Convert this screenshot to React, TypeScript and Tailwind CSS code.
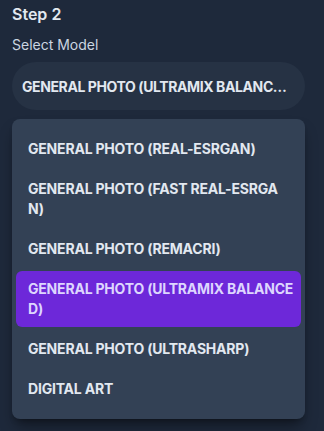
const models: { label: string; lines: string[] }[] = [
  { label: "General Photo (Real-ESRGAN)", lines: ["General Photo (Real-ESRGAN)"] },
  { label: "General Photo (Fast Real-ESRGAN)", lines: ["General Photo (Fast Real-ESRGA", "N)"] },
  { label: "General Photo (Remacri)", lines: ["General Photo (Remacri)"] },
  { label: "General Photo (Ultramix Balanced)", lines: ["General Photo (Ultramix Balance", "d)"] },
  { label: "General Photo (Ultrasharp)", lines: ["General Photo (Ultrasharp)"] },
  { label: "Digital Art", lines: ["Digital Art"] },
];

const selected = "General Photo (Ultramix Balanced)";

export default function App() {
  return (
    <div
      className="w-[324px] h-[431px] bg-[#1e293b] px-3 pt-[2px] text-[#e2e8f0]"
      style={{ fontFamily: "Inter, 'Open Sans', sans-serif" }}
    >
      <h2 className="text-[16px] font-semibold leading-6">Step 2</h2>
      <p className="mt-[9px] text-[14px] leading-5 text-[#cbd5e1]">Select Model</p>

      {/* Select trigger */}
      <button className="mt-[7px] w-[293px] h-12 rounded-3xl bg-[#263244] pl-2.5 pr-3.5 flex items-center text-left">
        <span className="truncate text-[14px] font-bold uppercase tracking-[-0.4px] text-[#e2e8f0]">{selected}</span>
      </button>

      {/* Options list */}
      <ul className="mt-[9px] w-[293px] flex flex-col rounded-lg bg-[#334155] px-1 py-2.5 shadow-lg shadow-black/40">
        {models.map((m) => {
          const active = m.label === selected;
          return (
            <li
              key={m.label}
              className={
                active
                  ? "my-0.5 rounded-md bg-[#6d28d9] px-3 py-2 text-[14px] leading-5 font-bold uppercase tracking-[-0.2px] whitespace-nowrap text-[#ddd6fe]"
                  : "my-0.5 rounded-md px-3 py-2 text-[14px] leading-5 font-bold uppercase tracking-[-0.2px] whitespace-nowrap text-[#e2e8f0]"
              }
            >
              {m.lines.map((l, i) => (
                <span key={i} className="block">
                  {l}
                </span>
              ))}
            </li>
          );
        })}
      </ul>
    </div>
  );
}
